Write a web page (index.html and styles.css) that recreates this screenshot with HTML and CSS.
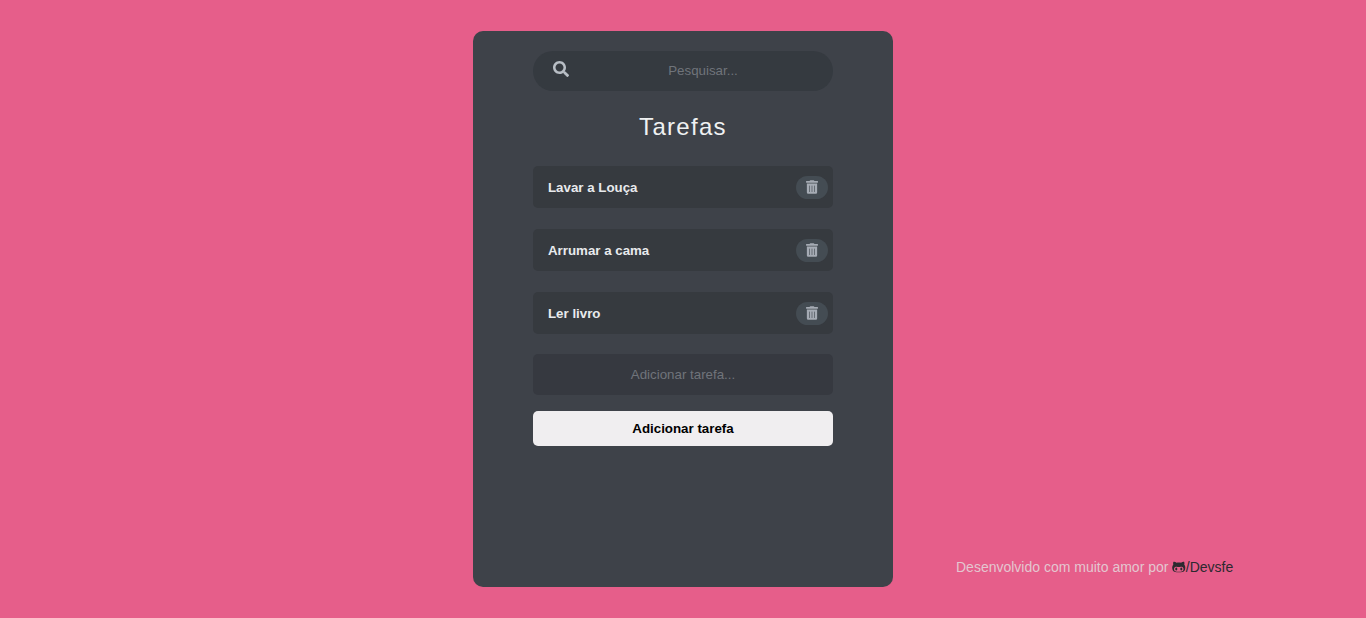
FILE: index.html
```html
<!DOCTYPE html>
<html lang="pt-BR">
<head>
<meta charset="UTF-8">
<title>Tarefas</title>
<link rel="stylesheet" href="styles.css">
</head>
<body>
<svg class="sprite" aria-hidden="true">
  <symbol id="trash" viewBox="0 0 448 512"><path d="M32 464a48 48 0 0 0 48 48h288a48 48 0 0 0 48-48V128H32zm276-256a12 12 0 0 1 24 0v224a12 12 0 0 1-24 0zm-96 0a12 12 0 0 1 24 0v224a12 12 0 0 1-24 0zm-96 0a12 12 0 0 1 24 0v224a12 12 0 0 1-24 0zM432 32H312l-9.400-18.700A24 24 0 0 0 281.100 0H166.800a23.720 23.720 0 0 0-21.400 13.300L136 32H16A16 16 0 0 0 0 48v32a16 16 0 0 0 16 16h416a16 16 0 0 0 16-16V48a16 16 0 0 0-16-16z"/></symbol>
</svg>
<main class="card">
  <label class="search">
    <svg class="search-icon" viewBox="0 0 512 512"><path d="M505 442.700L405.300 343c-4.500-4.500-10.600-7-17-7H372c27.600-35.300 44-79.700 44-128C416 93.100 322.900 0 208 0S0 93.100 0 208s93.100 208 208 208c48.300 0 92.700-16.400 128-44v16.300c0 6.400 2.500 12.500 7 17l99.700 99.700c9.400 9.400 24.600 9.400 33.900 0l28.300-28.300c9.400-9.400 9.400-24.600.1-34zM208 336c-70.700 0-128-57.200-128-128 0-70.700 57.200-128 128-128 70.700 0 128 57.200 128 128 0 70.700-57.200 128-128 128z"/></svg>
    <input class="field search-field" type="text" placeholder="Pesquisar...">
  </label>
  <h1 class="title">Tarefas</h1>
  <ul class="tasks">
    <li class="task"><span>Lavar a Louça</span><button class="remove" aria-label="Remover"><svg><use href="#trash"/></svg></button></li>
    <li class="task"><span>Arrumar a cama</span><button class="remove" aria-label="Remover"><svg><use href="#trash"/></svg></button></li>
    <li class="task"><span>Ler livro</span><button class="remove" aria-label="Remover"><svg><use href="#trash"/></svg></button></li>
  </ul>
  <input class="field new-task" type="text" placeholder="Adicionar tarefa...">
  <button class="add">Adicionar tarefa</button>
</main>
<footer class="credit">Desenvolvido com muito amor por <a class="author" href="#"><svg class="github" viewBox="0 0 480 512"><path d="M186.100 328.700c0 20.900-10.900 55.100-36.700 55.100s-36.700-34.200-36.700-55.100 10.900-55.100 36.700-55.100 36.700 34.200 36.700 55.100zM480 278.200c0 31.900-3.200 65.700-17.500 95-37.900 76.600-142.100 74.800-216.700 74.800-75.800 0-186.200 2.700-225.600-74.800-14.600-29-20.200-63.100-20.200-95 0-41.900 13.900-81.500 41.500-113.600-5.200-15.800-7.700-32.400-7.700-48.800 0-21.500 4.900-32.300 14.600-51.800 45.300 0 74.300 9 108.800 36 29-6.900 58.800-10 88.700-10 27 0 54.200 2.900 80.400 9.200 34-26.700 63-35.200 107.800-35.200 9.800 19.500 14.600 30.300 14.600 51.800 0 16.400-2.600 32.700-7.700 48.200 27.500 32.400 39 72.300 39 114.200zm-64.300 50.500c0-43.900-26.700-82.600-73.500-82.600-18.900 0-37 3.400-56 6-14.900 2.300-29.800 3.200-45.100 3.200-15.200 0-30.100-.9-45.100-3.200-18.700-2.600-37-6-56-6-46.800 0-73.500 38.700-73.500 82.600 0 87.800 80.400 101.300 150.400 101.300h48.200c70.300 0 150.600-13.400 150.600-101.300zm-82.600-55.100c-25.800 0-36.700 34.200-36.700 55.100s10.900 55.100 36.700 55.100 36.700-34.200 36.700-55.100-10.900-55.100-36.700-55.100z"/></svg>/Devsfe</a></footer>
</body>
</html>
```
FILE: styles.css
```css
* {
  box-sizing: border-box;
  margin: 0;
  padding: 0;
}

body {
  display: grid;
  grid-template-columns: 1fr 420px 1fr;
  height: 618px;
  padding: 31px 0;
  background: #e65e8a;
  font-family: "Liberation Sans", Arial, sans-serif;
  font-size: 13.333px;
}

.sprite {
  position: absolute;
  width: 0;
  height: 0;
}

.card {
  grid-column: 2;
  display: flex;
  flex-direction: column;
  height: 556px;
  padding: 20px 60px;
  border-radius: 10px;
  background: #3e4249;
}

.search {
  display: flex;
  align-items: center;
  height: 40px;
  padding: 0 20px;
  border-radius: 20px;
  background: #353a40;
}

.search-icon {
  flex: none;
  width: 16px;
  height: 16px;
  margin-bottom: 4px;
  fill: #b8bec5;
}

.field {
  border: 0;
  outline: 0;
  background: #353a40;
  color: #eee;
  font: inherit;
  text-align: center;
}

.field::placeholder {
  color: #70747b;
}

.search-field {
  flex: 1;
  min-width: 0;
  height: 40px;
  margin-left: 24px;
  padding-bottom: 2px;
  background: transparent;
}

.title {
  margin-top: 22px;
  color: #eff1f2;
  font-size: 24px;
  font-weight: 400;
  letter-spacing: 1.300px;
  line-height: 28px;
  text-align: center;
}

.tasks {
  display: flex;
  flex-direction: column;
  gap: 21px;
  margin-top: 25px;
  list-style: none;
}

.task {
  display: flex;
  align-items: center;
  justify-content: space-between;
  height: 42px;
  padding: 0 5px 0 15px;
  border-radius: 5px;
  background: #363a3f;
  color: #e8eaed;
  font-size: 13.300px;
  font-weight: 700;
}

.remove {
  display: flex;
  align-items: center;
  justify-content: center;
  width: 32px;
  height: 23px;
  border: 0;
  border-radius: 12px;
  background: #444c53;
}

.remove svg {
  width: 12px;
  height: 14px;
  fill: #a5abb4;
}

.new-task {
  height: 41px;
  margin-top: 20px;
  border-radius: 5px;
  background: #363940;
}

.add {
  height: 35px;
  margin-top: 16px;
  border: 0;
  border-radius: 5px;
  background: #f0eef0;
  color: #000;
  font: inherit;
  font-weight: 700;
}

.credit {
  grid-column: 3;
  align-self: end;
  padding-left: 63px;
  margin-bottom: 12px;
  color: #e4c6d0;
  font-size: 14px;
  line-height: 16px;
  white-space: nowrap;
}

.author {
  color: #2c292f;
  text-decoration: none;
}

.github {
  width: 13.500px;
  height: 14px;
  vertical-align: -2px;
  fill: currentColor;
}
```
